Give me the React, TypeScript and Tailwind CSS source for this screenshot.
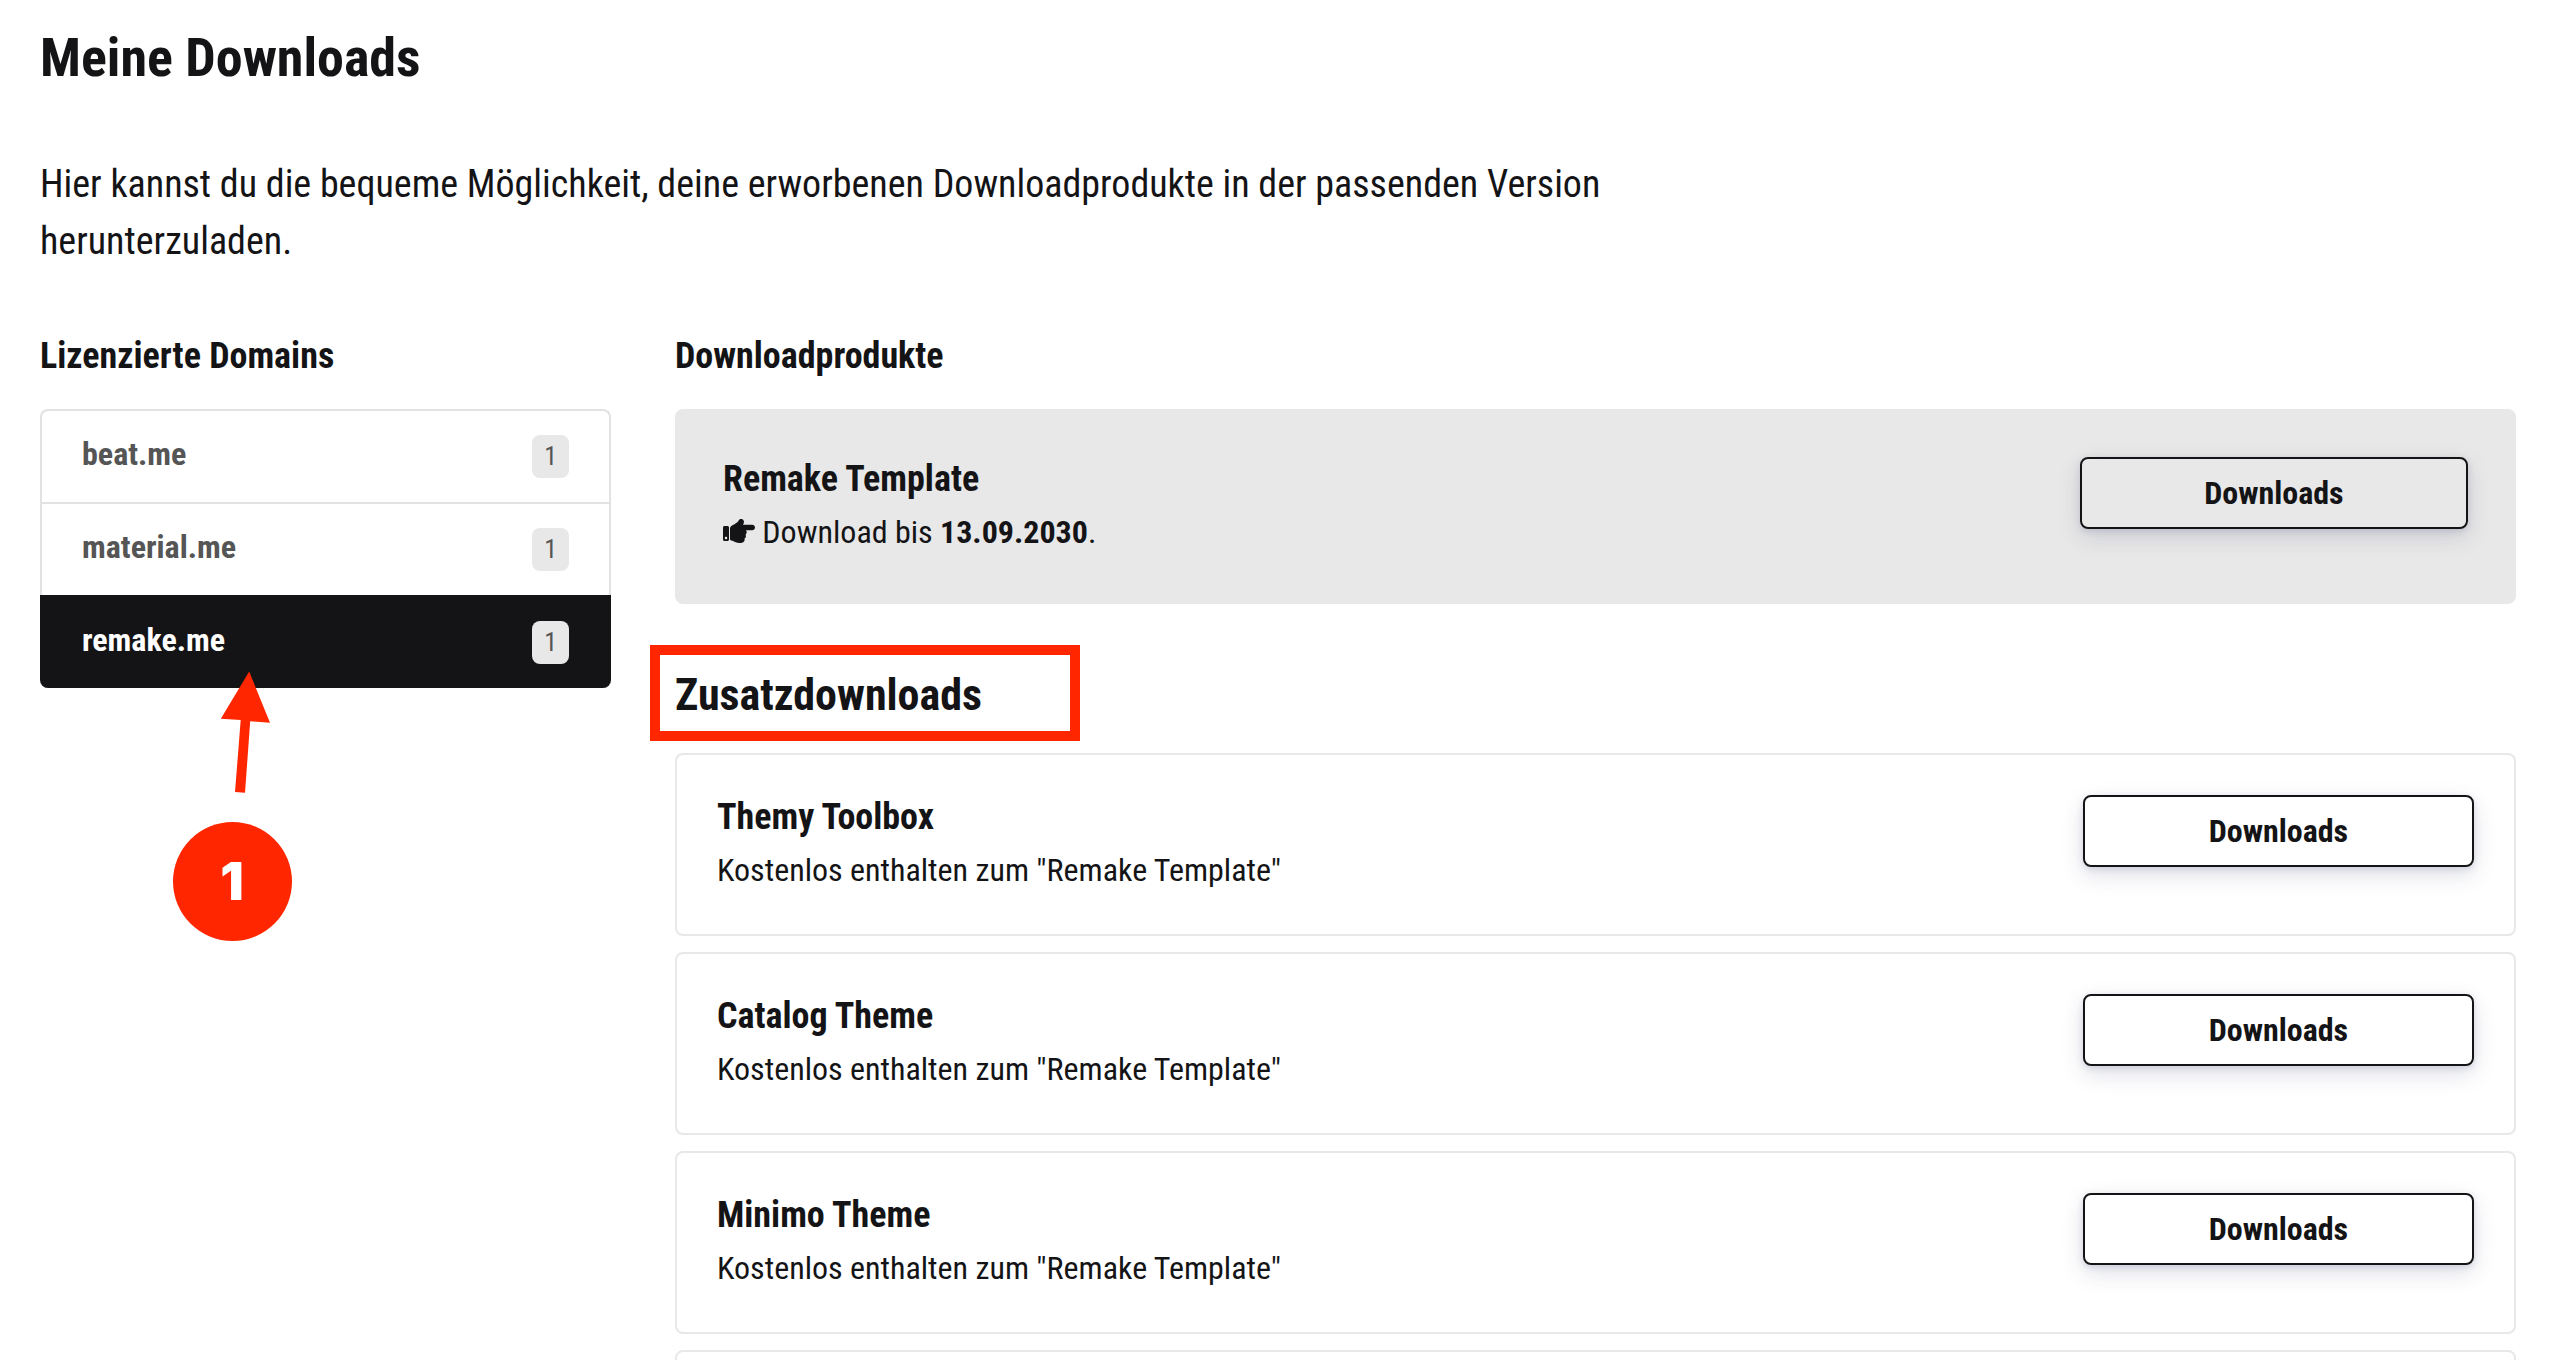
import { FaHandPointRight } from 'react-icons/fa'

interface Domain {
  name: string
  count: number
}

const DOMAINS: Domain[] = [
  { name: 'beat.me', count: 1 },
  { name: 'material.me', count: 1 },
  { name: 'remake.me', count: 1 },
]

const EXTRAS = ['Themy Toolbox', 'Catalog Theme', 'Minimo Theme']

const ACTIVE_DOMAIN = 'remake.me'

function DownloadButton() {
  return (
    <button
      type="button"
      className="h-[72px] w-full rounded-lg border-2 border-[#141416] text-[32px] leading-[48px] font-bold shadow-[0_8px_22px_rgba(37,44,97,0.15),0_2px_6px_rgba(93,100,148,0.2)]"
    >
      Downloads
    </button>
  )
}

function ProductRow({ title, children }: { title: string; children: React.ReactNode }) {
  return (
    <div className="-mx-8 flex">
      <div className="w-3/4 px-8">
        <h4 className="mb-1.5 text-[36px] leading-[45px] font-bold">{title}</h4>
        <p className="text-[32px] leading-[48px]">{children}</p>
      </div>
      <div className="w-1/4 px-8">
        <DownloadButton />
      </div>
    </div>
  )
}

function DomainItem({ domain, active }: { domain: Domain; active: boolean }) {
  return (
    <li className="first:rounded-t-lg last:rounded-b-lg">
      <a
        href="#"
        className={`flex items-start justify-between rounded-[inherit] border-x-2 border-t-2 px-10 py-5 ${
          active
            ? 'border-[#141416] bg-[#141416] text-white'
            : 'border-[#e2e2e2] text-[#555555]'
        }`}
      >
        <span className="text-[32px] leading-[46px] font-bold">{domain.name}</span>
        <span className="my-1 rounded-lg bg-[#e8e8e8] px-3 text-[26px] leading-[43px] text-[#555555]">
          {domain.count}
        </span>
      </a>
    </li>
  )
}

function StepMarker() {
  return (
    <div className="absolute top-[337px] left-[164px] flex w-[120px] flex-col items-center">
      <svg viewBox="0 0 120 124" className="h-[124px] w-[120px]" fill="#ff2600" aria-hidden="true">
        <path d="M77.2 0.6 L48.8 47.8 L68.7 49 L63 121 L73 121.8 L78.2 50.2 L98 51.7 Z" />
      </svg>
      <div className="mt-[27px] flex size-[119px] items-center justify-center rounded-full bg-[#ff2600] font-['Inter',sans-serif] text-[52px] font-black text-white">
        1
      </div>
    </div>
  )
}

export default function App() {
  return (
    <div className="h-screen overflow-hidden bg-white pr-3.5 pl-2 font-['Roboto_Condensed','Roboto',sans-serif] text-[#141416]">
      <header className="px-8 pt-[23px]">
        <h1 className="text-[54px] leading-[69px] font-bold">Meine Downloads</h1>
        <p className="mt-16 max-w-[1650px] text-[38px] leading-[57px]">
          Hier kannst du die bequeme Möglichkeit, deine erworbenen Downloadprodukte in der passenden
          Version herunterzuladen.
        </p>
      </header>

      <main className="mt-16 flex">
        <aside className="relative w-1/4 px-8">
          <h3 className="mb-[30px] text-[36px] leading-[45px] font-bold">Lizenzierte Domains</h3>
          <ul>
            {DOMAINS.map((domain) => (
              <DomainItem key={domain.name} domain={domain} active={domain.name === ACTIVE_DOMAIN} />
            ))}
          </ul>
          <StepMarker />
        </aside>

        <div className="w-3/4 px-8">
          <h3 className="mb-[30px] text-[36px] leading-[45px] font-bold">Downloadprodukte</h3>
          <section className="rounded-lg bg-[#e8e8e8] p-12">
            <ProductRow title="Remake Template">
              <FaHandPointRight className="inline align-[-4px]" /> Download bis{' '}
              <strong className="font-bold">13.09.2030</strong>.
            </ProductRow>
          </section>

          <div className="relative mt-16 mb-[30px]">
            <h2 className="text-[44px] leading-[55px] font-bold">Zusatzdownloads</h2>
            <div className="absolute -top-[23px] -left-[25px] h-24 w-[430px] border-[10px] border-[#ff2600]" />
          </div>

          <div className="flex flex-col gap-4">
            {EXTRAS.map((title) => (
              <section key={title} className="rounded-lg border-2 border-[#e8e8e8] p-10">
                <ProductRow title={title}>Kostenlos enthalten zum "Remake Template"</ProductRow>
              </section>
            ))}
            <section className="h-[183px] rounded-lg border-2 border-[#e8e8e8]" />
          </div>
        </div>
      </main>
    </div>
  )
}
